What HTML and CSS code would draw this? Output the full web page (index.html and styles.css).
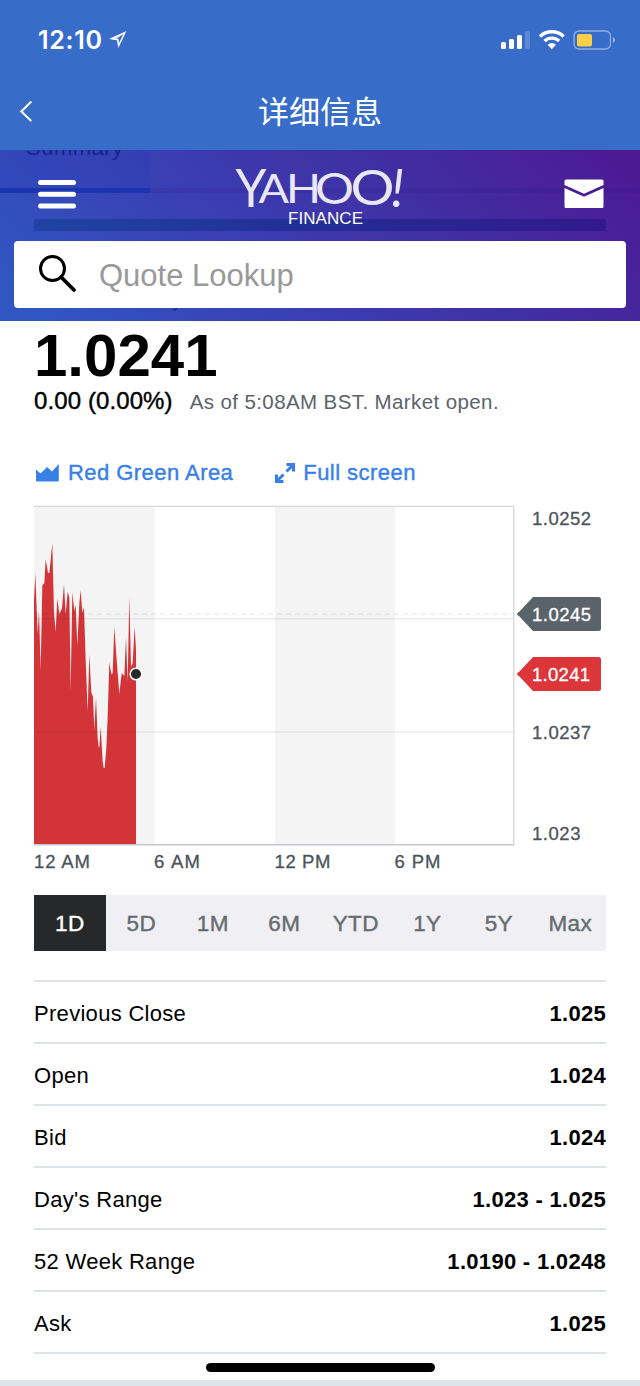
FILE: index.html
```html
<!DOCTYPE html>
<html lang="zh">
<head>
<meta charset="UTF-8" />
<meta name="viewport" content="width=device-width, initial-scale=1" />
<title>详细信息</title>
<link rel="stylesheet" href="styles.css">
</head>
<body>

<div class="topbar">
  <div class="status">
    <span class="clock">12:10</span>
    <svg class="location" width="18" height="18" viewBox="0 0 18 18"><path d="M15.8 1.6 3 7.7 8.9 8.8 9.7 14.5Z" fill="none" stroke="#fff" stroke-width="1.5"/><path d="M0 7.8 16 1 8.5 7.5 9 16.5 8 9.2Z" fill="#fff" opacity=".65"/></svg>
    <svg class="signals" width="116" height="22" viewBox="0 0 116 22">
      <g fill="#fff">
        <rect x="1" y="13" width="5" height="7" rx="1.5"/>
        <rect x="9" y="10" width="5" height="10" rx="1.5"/>
        <rect x="17" y="6" width="5" height="14" rx="1.5"/>
        <rect x="25" y="2" width="5" height="18" rx="1.5" opacity=".2"/>
      </g>
      <g fill="none" stroke="#fff" stroke-width="3.4">
        <path d="M40 7.4a17.5 17.5 0 0 1 23.6 0"/>
        <path d="M44.5 12a10.6 10.6 0 0 1 14.6 0"/>
      </g>
      <path d="M47.6 15.8a6 6 0 0 1 8.4 0l-4.2 4.4z" fill="#fff"/>
      <rect x="74" y="2" width="36.5" height="18" rx="5" fill="none" stroke="#fff" stroke-width="1.3" opacity=".45"/>
      <rect x="77" y="5" width="15" height="12.5" rx="2" fill="#f8cf46"/>
      <path d="M113 8v6q4-3 0-6z" fill="#fff" opacity=".5"/>
    </svg>
  </div>
  <div class="nav">
    <svg class="back" width="14" height="24" viewBox="0 0 14 24"><path d="M12.3 2.5 2.3 12.5l10 9.5" fill="none" stroke="#fff" stroke-width="2"/></svg>
    <h1>详细信息</h1>
  </div>
</div>

<header class="header">
  <!-- page content showing through the translucent header -->
  <div class="under">
    <div class="under-tab"><span>Summary</span></div>
    <div class="under-line"></div>
    <div class="under-strip"></div>
    <div class="under-text">y</div>
  </div>
  <div class="brand-row">
    <svg class="menu" width="38" height="30" viewBox="0 0 38 30" fill="#fff"><rect width="38" height="5" rx="2.5"/><rect y="11.7" width="38" height="5" rx="2.5"/><rect y="23.4" width="38" height="5" rx="2.5"/></svg>
    <svg class="logo" width="172" height="64" viewBox="234 164 172 64">
      <g class="logo-name">
        <text x="235.5" y="207" font-size="53" textLength="31" lengthAdjust="spacingAndGlyphs">Y</text>
        <text x="258.5" y="203" font-size="41.5" textLength="30.5" lengthAdjust="spacingAndGlyphs">A</text>
        <text x="286" y="203" font-size="41.5" textLength="35" lengthAdjust="spacingAndGlyphs">H</text>
        <text x="315" y="203.5" font-size="43" textLength="39" lengthAdjust="spacingAndGlyphs">O</text>
        <text x="350.5" y="205" font-size="48" textLength="44" lengthAdjust="spacingAndGlyphs">O</text>
        <text x="391" y="207" font-size="52" class="bang">!</text>
      </g>
      <text class="logo-sub" x="288" y="224" textLength="75">FINANCE</text>
    </svg>
    <svg class="mail" width="40" height="30" viewBox="0 0 40 30" fill="#fff"><path d="M2 .5h36q1.5 0 1.5 1.5v4L20 14.8.5 6V2Q.5.5 2 .5z"/><path d="M.5 9 20 17.8 39.5 9v18.5q0 1.5-1.5 1.5H2q-1.5 0-1.5-1.5z"/></svg>
  </div>
  <div class="search">
    <svg width="38" height="38" viewBox="0 0 38 38" fill="none" stroke="#000"><circle cx="13.5" cy="13.5" r="12" stroke-width="3"/><path d="M22 22 35 35" stroke-width="3.8" stroke-linecap="round"/></svg>
    <span>Quote Lookup</span>
  </div>
</header>

<main class="quote">
  <div class="price">1.0241</div>
  <div class="change">
    <span class="delta">0.00 (0.00%)</span>
    <span class="asof">As of 5:08AM BST. Market open.</span>
  </div>

  <div class="chart-links">
    <a><svg width="24" height="18" viewBox="0 0 24 18"><path d="M1 5.5 5.5 9.5 12 3l5 4.5L23.8 0v16.5q0 1-1 1H2q-1 0-1-1z" fill="#3880e8"/></svg><span>Red Green Area</span></a>
    <a class="full"><svg width="22" height="22" viewBox="0 0 22 22" fill="none" stroke="#3880e8" stroke-width="3"><path d="M12.5 2.5h7V9.5M19.5 2.5 12.5 9.5"/><path d="M9.5 19.5h-7V12.5M2.5 19.5 9.5 12.5"/></svg><span>Full screen</span></a>
  </div>

  <svg class="chart" width="572" height="380" viewBox="34 500 572 380">
    <rect x="34" y="506" width="120.5" height="338" fill="#f4f4f4"/>
    <rect x="275" y="506" width="120" height="338" fill="#f4f4f4"/>
    <path class="area" transform="translate(20 500) scale(.33333)" d="M42 1032V300L46 218 49 300 53 402 57 332 62 510 67 256 73 250 77 178 84 218 88 220 97 130 102 340 107 395 112 295 118 342 126 325 132 253 137 342 143 275 148 292 152 572 157 277 163 333 167 315 172 437 178 310 182 270 187 338 192 322 197 480 203 635 208 463 214 578 219 590 223 690 228 592 233 715 236 742 238 742 242 680 248 785 251 804 254 804 259 745 263 650 268 487 274 523 278 520 283 380 290 480 298 582 305 520 313 528 318 412 323 545 328 290 333 500 338 490 344 380 348 450V1032Z"/>
    <g class="grid">
      <path d="M34 618.7H514M34 732H514"/>
      <path d="M34 614H514" stroke-dasharray="5 4"/>
    </g>
    <path d="M34 506.3H513.8V844.8" fill="none" stroke="#d5d6de" stroke-width="1.3"/>
    <path d="M34 844.8H514" stroke="#c5c8d0" stroke-width="1.6"/>
    <circle cx="136" cy="674" r="5.8" fill="#26282a" stroke="#fff" stroke-width="1.5"/>
    <path d="M533 597h65.5q2.5 0 2.5 2.5v29q0 2.5-2.5 2.5H533L519.5 616.5q-5-2.5 0-5z" fill="#5b636a"/>
    <path d="M533 657h65.5q2.5 0 2.5 2.5v29q0 2.5-2.5 2.5H533L519.5 676.5q-5-2.5 0-5z" fill="#dc363a"/>
    <g class="axis">
      <text x="532" y="524.5" textLength="59">1.0252</text>
      <text x="532" y="620.5" textLength="59" class="tag">1.0245</text>
      <text x="532" y="680.5" textLength="58" class="tag">1.0241</text>
      <text x="532" y="738.5" textLength="59">1.0237</text>
      <text x="532" y="840" textLength="48.5">1.023</text>
      <text x="34" y="867.5" textLength="56">12 AM</text>
      <text x="154" y="867.5" textLength="46">6 AM</text>
      <text x="274.5" y="867.5" textLength="56">12 PM</text>
      <text x="394.5" y="867.5" textLength="46">6 PM</text>
    </g>
  </svg>

  <div class="ranges">
    <span class="active">1D</span><span>5D</span><span>1M</span><span>6M</span><span>YTD</span><span>1Y</span><span>5Y</span><span>Max</span>
  </div>

  <div class="stats">
    <div class="row"><span>Previous Close</span><b>1.025</b></div>
    <div class="row"><span>Open</span><b>1.024</b></div>
    <div class="row"><span>Bid</span><b>1.024</b></div>
    <div class="row"><span>Day's Range</span><b>1.023 - 1.025</b></div>
    <div class="row"><span>52 Week Range</span><b>1.0190 - 1.0248</b></div>
    <div class="row"><span>Ask</span><b>1.025</b></div>
  </div>
</main>

<div class="home"></div>
<div class="footer"></div>

</body>
</html>
```
FILE: styles.css
```css
* {
  box-sizing: border-box;
}
body {
  margin: 0;
  width: 640px;
  height: 1386px;
  overflow: hidden;
  display: flex;
  flex-direction: column;
  background: #fff;
  color: #000;
  font-family: "Liberation Sans", "Noto Sans CJK SC", sans-serif;
}
svg {
  display: block;
  flex: none;
}

/* top bar */
.topbar {
  height: 150px;
  flex: none;
  background: #376dc8;
  color: #fff;
}
.status {
  height: 72px;
  padding: 8px 24px 0 38px;
  display: flex;
  align-items: center;
}
.clock {
  font: 600 25px Inter, sans-serif;
  letter-spacing: .7px;
  width: 71px;
}
.signals {
  margin-left: auto;
}
.nav {
  height: 78px;
  display: grid;
  grid-template-columns: 80px 1fr 80px;
  align-items: center;
}
.back {
  margin-left: 19px;
}
.nav h1 {
  margin: 0;
  padding-bottom: 4px;
  text-align: center;
  font: 400 31px "Noto Sans CJK SC", sans-serif;
}

/* yahoo header */
.header {
  position: relative;
  height: 171px;
  flex: none;
  padding: 14px 14px 0;
  background: linear-gradient(45deg, #3156c2 5%, #3a3eb1 40%, #422ca1 70%, #4b1d96 92%, #4d1991 100%);
}
.under {
  position: absolute;
  inset: 0;
  overflow: hidden;
}
.under-tab {
  position: absolute;
  width: 150px;
  height: 43px;
  background: rgba(35, 60, 185, .2);
  border-bottom: 5px solid #1b34b2;
}
.under-tab span {
  position: absolute;
  left: 26px;
  top: -15px;
  color: rgba(15, 25, 120, .75);
  font-size: 22px;
  letter-spacing: .5px;
}
.under-line {
  position: absolute;
  left: 150px;
  right: 0;
  top: 38px;
  height: 5px;
  background: rgba(40, 20, 130, .15);
}
.under-strip {
  position: absolute;
  left: 34px;
  right: 34px;
  top: 69px;
  height: 12px;
  background: linear-gradient(90deg, #2044a4, #222f98 45%, #33198a);
}
.under-text {
  position: absolute;
  left: 172px;
  top: 139px;
  color: rgba(15, 25, 120, .7);
  font-size: 20px;
}
.brand-row {
  position: relative;
  display: flex;
  justify-content: space-between;
  height: 77px;
  padding: 0 22px 0 24px;
}
.menu {
  margin-top: 16px;
}
.logo {
  margin-left: -1px;
}
.logo-name {
  font-family: Lato, sans-serif;
  font-weight: 400;
  fill: #e9e8f2;
}
.bang {
  font-style: italic;
}
.logo-sub {
  font-size: 17px;
  fill: #fff;
}
.mail {
  margin-top: 15px;
}
.search {
  position: relative;
  height: 67px;
  padding: 0 25px 2px;
  display: flex;
  align-items: center;
  gap: 22px;
  background: #fff;
  border-radius: 4px;
  color: #999;
  font-size: 31px;
}
.search span {
  padding-top: 4px;
}

/* quote */
.quote {
  padding: 0 34px;
  height: 1042px;
  flex: none;
}
.price {
  height: 66px;
  font-size: 60px;
  font-weight: bold;
  line-height: 70px;
}
.change {
  height: 73px;
  display: flex;
  align-items: baseline;
  gap: 17px;
}
.delta {
  font-size: 24px;
  letter-spacing: .1px;
  -webkit-text-stroke: .4px #000;
}
.asof {
  font-size: 20.5px;
  letter-spacing: .4px;
  color: #5b636a;
}
.chart-links {
  height: 40px;
  display: flex;
  gap: 40px;
  color: #3880e8;
  font-size: 22px;
  -webkit-text-stroke: .4px #3880e8;
  letter-spacing: .45px;
}
.chart-links a {
  display: flex;
  gap: 9px;
  align-items: center;
  height: 25px;
  padding-left: 1px;
}
.chart-links .full {
  gap: 7px;
}
.area {
  fill: #d33438;
}
.grid {
  fill: none;
  stroke: #000;
  stroke-opacity: .07;
  stroke-width: 1.5;
}
.axis {
  font-size: 18.5px;
  fill: #4b545b;
  stroke: #4b545b;
  stroke-width: .3;
}
.axis .tag {
  fill: #fff;
  stroke: #fff;
}
.ranges {
  margin-top: 15px;
  height: 56px;
  display: grid;
  grid-template-columns: repeat(8, 1fr);
  background: #f0eff4;
  color: #656c70;
  font-size: 22.5px;
  letter-spacing: .3px;
  line-height: 57px;
  text-align: center;
  -webkit-text-stroke: .4px;
}
.ranges span {
  height: 56px;
}
.ranges .active {
  background: #26282a;
  color: #fff;
}
.stats {
  margin-top: 29px;
  border-top: 2px solid #e2e4e9;
}
.row {
  height: 62px;
  padding-top: 3px;
  display: flex;
  justify-content: space-between;
  align-items: center;
  border-bottom: 2px solid #e0e4e9;
  font-size: 22px;
}
.row span {
  letter-spacing: .3px;
}
.row b {
  letter-spacing: .3px;
}

.home {
  width: 229px;
  height: 9px;
  flex: none;
  margin: 0 auto 8px;
  border-radius: 5px;
  background: #000;
}
.footer {
  height: 6px;
  flex: none;
  background: #e0e4e9;
}
```
